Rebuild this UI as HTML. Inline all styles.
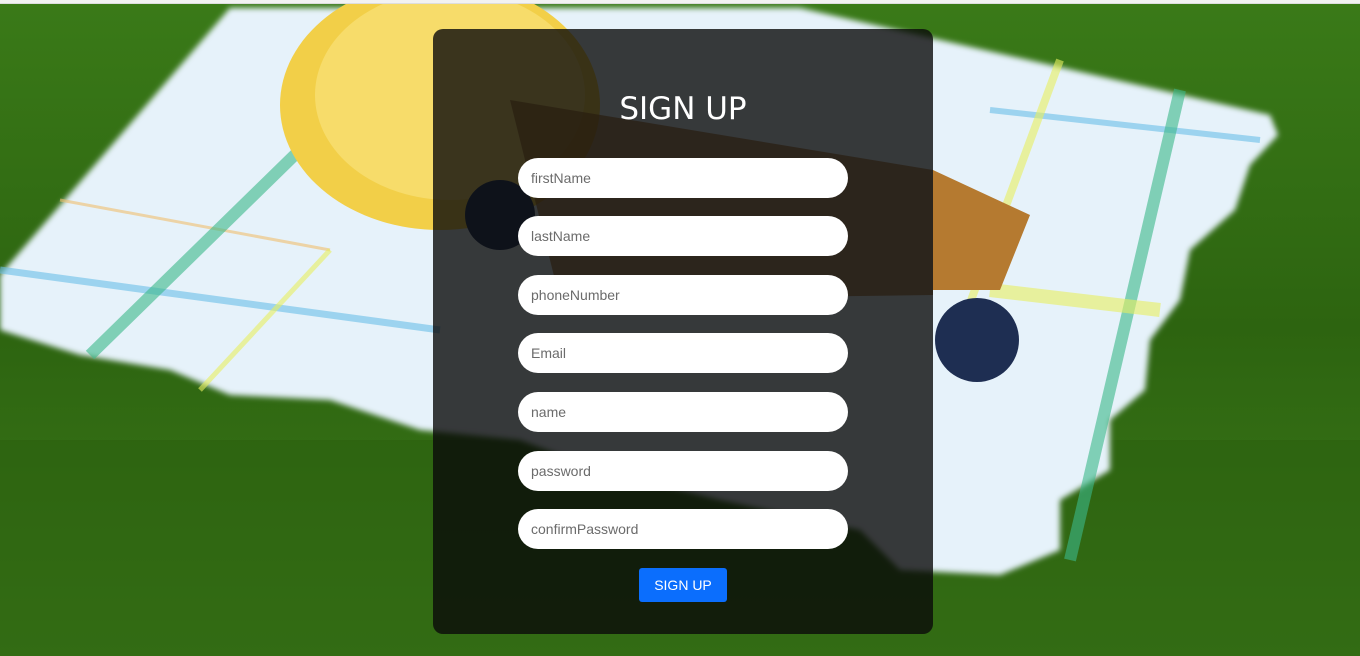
<!DOCTYPE html>
<html><head><meta charset="utf-8"><style>
html,body{margin:0;padding:0;width:1360px;height:656px;overflow:hidden;font-family:"Liberation Sans",sans-serif}
#bg{position:absolute;left:0;top:0}
.topline{position:absolute;left:0;top:0;width:1360px;height:3px;background:#f2f2f2;border-bottom:1px solid #ddd}
.panel{position:absolute;left:433px;top:29px;width:500px;height:605px;border-radius:10px;background:rgba(10,10,10,0.8)}
h1{position:absolute;left:0;width:500px;top:60px;margin:0;text-align:center;color:#fff;font-family:"Comic Sans MS","DejaVu Sans",sans-serif;font-weight:normal;font-size:31px;line-height:40px}
.in{position:absolute;left:85px;width:330px;height:40px;border-radius:20px;background:#fff;box-sizing:border-box;padding-left:13px;line-height:40px;font-size:14px;color:#6b6b6b}
.btn{position:absolute;left:206px;top:539px;width:88px;height:34px;border-radius:3px;background:#0b6efd;color:#fff;font-size:14px;line-height:34px;text-align:center}
</style></head><body>
<svg id="bg" width="1360" height="656" viewBox="0 0 1360 656">
<defs>
<linearGradient id="g" x1="0" y1="0" x2="0" y2="1"><stop offset="0" stop-color="#3a7a18"/><stop offset="0.5" stop-color="#2d6410"/><stop offset="1" stop-color="#3c7a1a"/></linearGradient>
<filter id="bl"><feGaussianBlur stdDeviation="3"/></filter>
</defs>
<rect width="1360" height="656" fill="url(#g)"/>
<rect x="0" y="440" width="1360" height="216" fill="#2a5e0e" opacity="0.5"/>
<path filter="url(#bl)" d="M0 275 L230 8 L800 8 L1270 115 L1278 135 L1250 165 L1235 210 L1190 250 L1180 300 L1150 340 L1145 390 L1110 420 L1110 470 L1060 500 L1060 550 L1000 575 L900 570 L860 530 L720 500 L600 470 L520 440 L420 430 L330 400 L230 395 L170 370 L80 355 L0 330 Z" fill="#e6f2fa"/>
<path d="M0 270 L440 330" stroke="#6cc0e8" stroke-width="7" opacity="0.6"/>
<path d="M990 110 L1260 140" stroke="#6cc0e8" stroke-width="6" opacity="0.6"/>
<path d="M60 200 L330 250" stroke="#f0c070" stroke-width="3" opacity="0.6"/>
<path d="M90 355 L310 140" stroke="#3cb98a" stroke-width="12" opacity="0.6"/>
<path d="M200 390 L330 250" stroke="#e8f060" stroke-width="5" opacity="0.6"/>
<path d="M1180 90 L1070 560" stroke="#3cb98a" stroke-width="12" opacity="0.6"/>
<path d="M1060 60 L960 330" stroke="#e8f060" stroke-width="8" opacity="0.6"/>
<path d="M990 290 L1160 310" stroke="#e8f060" stroke-width="14" opacity="0.6"/>
<ellipse cx="440" cy="105" rx="160" ry="125" fill="#f2cf48"/>
<ellipse cx="450" cy="95" rx="135" ry="105" fill="#f7dc6a"/>
<path d="M510 100 L933 170 L933 295 L560 300 Z" fill="#a06a28" opacity="0.7"/>
<path d="M933 170 L1030 215 L1000 290 L933 290 Z" fill="#b57a30"/>
<circle cx="977" cy="340" r="42" fill="#1e2e52"/>
<circle cx="500" cy="215" r="35" fill="#22345a"/>
</svg>
<div class="topline"></div>
<div class="panel">
<h1>SIGN UP</h1>
<div class="in" style="top:129px">firstName</div>
<div class="in" style="top:187px">lastName</div>
<div class="in" style="top:246px">phoneNumber</div>
<div class="in" style="top:304px">Email</div>
<div class="in" style="top:363px">name</div>
<div class="in" style="top:422px">password</div>
<div class="in" style="top:480px">confirmPassword</div>
<div class="btn">SIGN UP</div>
</div>
</body></html>
